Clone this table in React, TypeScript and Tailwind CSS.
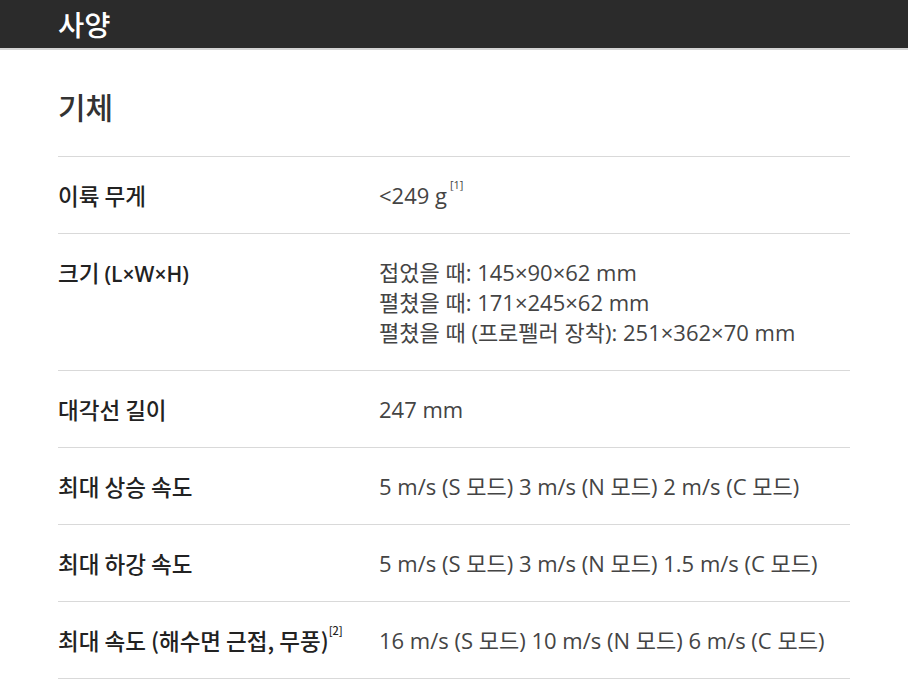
const rows: { label: React.ReactNode; value: React.ReactNode }[] = [
  {
    label: "이륙 무게",
    value: (
      <>
        &lt;249 g<sup className="ml-[3px] text-[11px] align-[10px]">[1]</sup>
      </>
    ),
  },
  {
    label: (
      <>
        크기 <span className="font-['Open_Sans',sans-serif] font-semibold text-[21px]">(L×W×H)</span>
      </>
    ),
    value: (
      <>
        <div>접었을 때: 145×90×62 mm</div>
        <div>펼쳤을 때: 171×245×62 mm</div>
        <div>펼쳤을 때 (프로펠러 장착): 251×362×70 mm</div>
      </>
    ),
  },
  { label: "대각선 길이", value: "247 mm" },
  { label: "최대 상승 속도", value: "5 m/s (S 모드) 3 m/s (N 모드) 2 m/s (C 모드)" },
  { label: "최대 하강 속도", value: "5 m/s (S 모드) 3 m/s (N 모드) 1.5 m/s (C 모드)" },
  {
    label: (
      <>
        최대 속도 (해수면 근접, 무풍)<sup className="text-[11px] align-[10px]">[2]</sup>
      </>
    ),
    value: "16 m/s (S 모드) 10 m/s (N 모드) 6 m/s (C 모드)",
  },
];

import React from "react";

export default function App() {
  return (
    <div className="min-h-screen w-[908px] bg-white font-['Open_Sans','Noto_Sans_CJK_KR',sans-serif]">
      <div className="h-[50px] bg-[#2b2b2b] border-b-2 border-[#d4d4d4] flex items-center pl-[58px] pt-[2px]">
        <h1 className="text-[28.5px] text-white leading-none font-medium">사양</h1>
      </div>
      <div className="pl-[58px] w-[850px]">
        <h2 className="text-[30px] text-[#333] font-medium h-[106px] flex items-center pt-[8px]">
          기체
        </h2>
        <div className="border-t border-[#d9d9d9]">
          {rows.map((r, i) => (
            <div key={i} className="flex border-b border-[#d9d9d9] py-[23px] text-[22px] leading-[30px]">
              <div className="w-[321px] shrink-0 font-medium text-[#222] text-[22.5px] font-['Noto_Sans_CJK_KR',sans-serif]">
                {r.label}
              </div>
              <div className="text-[#444]">{r.value}</div>
            </div>
          ))}
        </div>
      </div>
    </div>
  );
}
